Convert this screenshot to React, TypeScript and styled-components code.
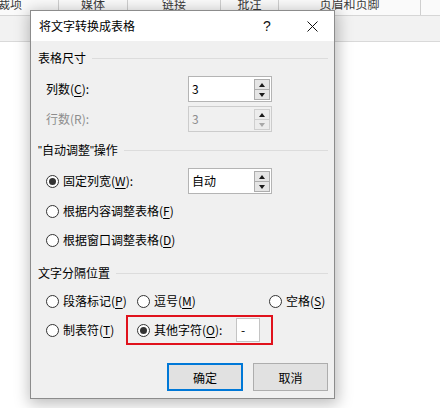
import React from "react";
import styled, { createGlobalStyle } from "styled-components";

const GlobalStyle = createGlobalStyle`
  html, body { margin: 0; padding: 0; background: #fff; }
  body {
    font-family: "Noto Sans CJK SC", "Microsoft YaHei", sans-serif;
    font-size: 12px;
    color: #000;
  }
`;

const Screen = styled.div`
  position: relative;
  width: 440px;
  height: 408px;
  overflow: hidden;
  background: #fff;
`;

const Ribbon = styled.div`
  display: flex;
  height: 15px;
  border-bottom: 1px solid #d6d6d6;
  background: #fafafa;
`;

const RibbonGroup = styled.div<{ $w: number; $start?: boolean }>`
  width: ${(p) => p.$w}px;
  flex: none;
  box-sizing: border-box;
  border-right: 1px solid #cfcfcf;
  display: flex;
  justify-content: ${(p) => (p.$start ? "flex-start" : "center")};
  align-items: flex-end;
  padding-bottom: 5px;
  line-height: 12px;
  font-size: 12px;
  color: #3a3a3a;
  white-space: nowrap;
  overflow: visible;
  ${(p) => (p.$start ? "padding-left: 0; margin-left: -2px;" : "")}
`;

const Band = styled.div`
  height: 25px;
  background: #f2f2f2;
  border-bottom: 1px solid #d9d9d9;
`;

const Dialog = styled.div`
  position: absolute;
  left: 30px;
  top: 10px;
  width: 305px;
  box-sizing: border-box;
  border: 1px solid #8c8c8c;
  background: #f0f0f0;
  box-shadow: 1px 3px 14px 2px rgba(0, 0, 0, 0.26);
`;

const TitleBar = styled.div`
  height: 30px;
  background: #fff;
  display: flex;
  align-items: center;
  padding-left: 8px;
`;

const TitleText = styled.div`
  flex: 1;
  font-size: 12px;
  line-height: 30px;
`;

const TitleButton = styled.div<{ $w: number }>`
  width: ${(p) => p.$w}px;
  height: 30px;
  display: flex;
  align-items: center;
  justify-content: center;
  font-family: "Liberation Sans", "DejaVu Sans", sans-serif;
  font-size: 14px;
  color: #111;
`;

const Body = styled.div`
  padding: 8px 6px 7px 7px;
`;

const SectionHeading = styled.div<{ $mt?: number }>`
  display: flex;
  align-items: center;
  height: 18px;
  line-height: 18px;
  margin-top: ${(p) => p.$mt ?? 0}px;
  white-space: nowrap;
`;

const Quote = styled.span`
  font-family: "Liberation Sans", sans-serif;
  font-size: 11px;
  letter-spacing: 0;
`;

const HeadingRule = styled.div`
  flex: 1;
  height: 1px;
  background: #dcdcdc;
  margin-left: 6px;
`;

const FieldRow = styled.div<{ $h: number; $mt: number }>`
  display: flex;
  align-items: center;
  height: ${(p) => p.$h}px;
  margin-top: ${(p) => p.$mt}px;
  padding-left: 8px;
  line-height: 16px;
`;

const FieldLabel = styled.div<{ $disabled?: boolean }>`
  width: 142px;
  flex: none;
  display: flex;
  align-items: center;
  color: ${(p) => (p.$disabled ? "#8d8d8d" : "#000")};
  white-space: nowrap;
`;

const SpinBox = styled.div<{ $disabled?: boolean }>`
  display: flex;
  width: 84px;
  height: 26px;
  box-sizing: border-box;
  border: 1px solid ${(p) => (p.$disabled ? "#cccccc" : "#b4b4b4")};
  background: ${(p) => (p.$disabled ? "#f0f0f0" : "#fff")};
  padding: 1px;
`;

const SpinValue = styled.div<{ $disabled?: boolean }>`
  flex: 1;
  padding-left: 2px;
  line-height: 21px;
  font-size: 12px;
  color: ${(p) => (p.$disabled ? "#8d8d8d" : "#000")};
`;

const SpinButtons = styled.div`
  width: 16px;
  display: flex;
  flex-direction: column;
  padding-top: 1px;
`;

const SpinButton = styled.div<{ $disabled?: boolean }>`
  flex: 1;
  box-sizing: border-box;
  border: 1px solid ${(p) => (p.$disabled ? "#cfcfcf" : "#adadad")};
  background: ${(p) => (p.$disabled ? "#ececec" : "#e5e5e5")};
  display: flex;
  align-items: center;
  justify-content: center;
  & + & {
    margin-top: -1px;
  }
`;

const Arrow = styled.div<{ $down?: boolean; $light?: boolean }>`
  width: 0;
  height: 0;
  border-left: 3.5px solid transparent;
  border-right: 3.5px solid transparent;
  ${(p) =>
    p.$down
      ? `border-top: 4px solid ${p.$light ? "#a8a8a8" : "#1a1a1a"};`
      : `border-bottom: 4px solid ${p.$light ? "#a8a8a8" : "#1a1a1a"};`}
`;

const RadioOption = styled.div<{ $w?: number }>`
  display: flex;
  align-items: center;
  white-space: nowrap;
  ${(p) => (p.$w ? `width: ${p.$w}px; flex: none;` : "")}
`;

const RadioCircle = styled.div`
  width: 13px;
  height: 13px;
  box-sizing: border-box;
  border: 1px solid #333;
  border-radius: 50%;
  background: #fff;
  display: flex;
  align-items: center;
  justify-content: center;
  margin-right: 4px;
  flex: none;
`;

const RadioDot = styled.div`
  width: 7px;
  height: 7px;
  border-radius: 50%;
  background: #333;
`;

const AccessKey = styled.span`
  text-decoration: underline;
  text-underline-offset: 2px;
`;

const RedFrame = styled.div`
  display: flex;
  align-items: center;
  justify-content: space-between;
  width: 147px;
  height: 30px;
  box-sizing: border-box;
  border: 2px solid #e0121c;
  padding: 0 11px 0 9px;
`;

const CharInput = styled.div`
  width: 24px;
  height: 24px;
  box-sizing: border-box;
  border: 1px solid #c4c4c4;
  background: #fff;
  padding-left: 4px;
  line-height: 21px;
`;

const ButtonRow = styled.div`
  display: flex;
  justify-content: flex-end;
  gap: 10px;
  margin-top: 18px;
`;

const DialogButton = styled.div<{ $w: number; $primary?: boolean }>`
  width: ${(p) => p.$w}px;
  height: 28px;
  box-sizing: border-box;
  border: ${(p) => (p.$primary ? "2px solid #0078d7" : "1px solid #adadad")};
  background: #e1e1e1;
  display: flex;
  align-items: center;
  justify-content: center;
  font-size: 12px;
`;

type RadioProps = { label: string; keyChar?: string; suffix?: string; checked?: boolean; w?: number };

const Radio = ({ label, keyChar, suffix = "", checked, w }: RadioProps) => (
  <RadioOption $w={w}>
    <RadioCircle>{checked && <RadioDot />}</RadioCircle>
    <span>
      {label}
      {keyChar && (
        <>
          (<AccessKey>{keyChar}</AccessKey>)
        </>
      )}
      {suffix}
    </span>
  </RadioOption>
);

const Spinner = ({ value, disabled }: { value: string; disabled?: boolean }) => (
  <SpinBox $disabled={disabled}>
    <SpinValue $disabled={disabled}>{value}</SpinValue>
    <SpinButtons>
      <SpinButton $disabled={disabled}>
        <Arrow />
      </SpinButton>
      <SpinButton $disabled={disabled}>
        <Arrow $down $light={disabled} />
      </SpinButton>
    </SpinButtons>
  </SpinBox>
);

const CloseIcon = () => (
  <svg width="11" height="11" viewBox="0 0 11 11">
    <path d="M0.5 0.5 L10.5 10.5 M10.5 0.5 L0.5 10.5" stroke="#111" strokeWidth="1" fill="none" />
  </svg>
);

export default function App() {
  return (
    <Screen>
      <GlobalStyle />
      <Ribbon>
        <RibbonGroup $w={61} $start>
          裁项
        </RibbonGroup>
        <RibbonGroup $w={69}>媒体</RibbonGroup>
        <RibbonGroup $w={93}>链接</RibbonGroup>
        <RibbonGroup $w={58}>批注</RibbonGroup>
        <RibbonGroup $w={142}>页眉和页脚</RibbonGroup>
      </Ribbon>
      <Band />

      <Dialog>
        <TitleBar>
          <TitleText>将文字转换成表格</TitleText>
          <TitleButton $w={46}>?</TitleButton>
          <TitleButton $w={44}>
            <CloseIcon />
          </TitleButton>
        </TitleBar>
        <Body>
          <SectionHeading>
            表格尺寸
            <HeadingRule />
          </SectionHeading>
          <FieldRow $h={26} $mt={9}>
            <FieldLabel>
              列数(<AccessKey>C</AccessKey>):
            </FieldLabel>
            <Spinner value="3" />
          </FieldRow>
          <FieldRow $h={26} $mt={4}>
            <FieldLabel $disabled>行数(R):</FieldLabel>
            <Spinner value="3" disabled />
          </FieldRow>

          <SectionHeading $mt={9}>
            <Quote>"</Quote>自动调整<Quote>"</Quote>操作
            <HeadingRule />
          </SectionHeading>
          <FieldRow $h={26} $mt={9}>
            <FieldLabel>
              <Radio label="固定列宽" keyChar="W" suffix=":" checked />
            </FieldLabel>
            <Spinner value="自动" />
          </FieldRow>
          <FieldRow $h={24} $mt={5}>
            <Radio label="根据内容调整表格" keyChar="F" />
          </FieldRow>
          <FieldRow $h={24} $mt={5}>
            <Radio label="根据窗口调整表格" keyChar="D" />
          </FieldRow>

          <SectionHeading $mt={12}>
            文字分隔位置
            <HeadingRule />
          </SectionHeading>
          <FieldRow $h={24} $mt={7}>
            <Radio label="段落标记" keyChar="P" w={91} />
            <Radio label="逗号" keyChar="M" w={132} />
            <Radio label="空格" keyChar="S" />
          </FieldRow>
          <FieldRow $h={30} $mt={2}>
            <Radio label="制表符" keyChar="T" w={80} />
            <RedFrame>
              <Radio label="其他字符" keyChar="O" suffix=":" checked />
              <CharInput>-</CharInput>
            </RedFrame>
          </FieldRow>

          <ButtonRow>
            <DialogButton $w={76} $primary>
              确定
            </DialogButton>
            <DialogButton $w={75}>取消</DialogButton>
          </ButtonRow>
        </Body>
      </Dialog>
    </Screen>
  );
}
